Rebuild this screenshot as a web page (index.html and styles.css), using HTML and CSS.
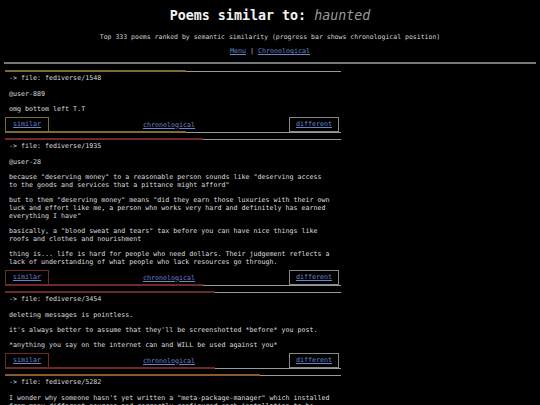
FILE: index.html
```html
<!DOCTYPE html>
<html>
<head>
<meta charset="utf-8">
<title>Poems similar to: haunted</title>
<link rel="stylesheet" href="styles.css">
</head>
<body>
<h1 class="title">Poems similar to: <em class="query">haunted</em></h1>
<p class="subtitle">Top 333 poems ranked by semantic similarity (progress bar shows chronological position)</p>
<p class="nav-links"><a href="#">Menu</a> <span class="sep">|</span> <a href="#">Chronological</a></p>
<hr class="rule">

<div class="poem" style="--p:54%;--c:#7e6d33">
  <div class="bar"><div class="fill"></div><div class="rest"></div></div>
  <div class="body">
    <div class="head">-&gt; file: fediverse/1548</div>
    <p class="first">@user-889</p>
    <p>omg bottom left T.T</p>
  </div>
  <div class="actions">
    <a class="btn btn-sim" href="#">similar</a>
    <a class="chrono" href="#">chronological</a>
    <a class="btn btn-diff" href="#">different</a>
  </div>
  <div class="bar"><div class="fill"></div><div class="rest"></div></div>
</div>

<div class="poem" style="--p:59%;--c:#6e2b2b">
  <div class="bar"><div class="fill"></div><div class="rest"></div></div>
  <div class="body">
    <div class="head">-&gt; file: fediverse/1935</div>
    <p class="first">@user-28</p>
    <p>because "deserving money" to a reasonable person sounds like "deserving access to the goods and services that a pittance might afford"</p>
    <p>but to them "deserving money" means "did they earn those luxuries with their own luck and effort like me, a person who works very hard and definitely has earned everything I have"</p>
    <p>basically, a "blood sweat and tears" tax before you can have nice things like roofs and clothes and nourishment</p>
    <p>thing is... life is hard for people who need dollars. Their judgement reflects a lack of understanding of what people who lack resources go through.</p>
  </div>
  <div class="actions">
    <a class="btn btn-sim" href="#">similar</a>
    <a class="chrono" href="#">chronological</a>
    <a class="btn btn-diff" href="#">different</a>
  </div>
  <div class="bar"><div class="fill"></div><div class="rest"></div></div>
</div>

<div class="poem" style="--p:62.5%;--c:#6a2a2a">
  <div class="bar"><div class="fill"></div><div class="rest"></div></div>
  <div class="body">
    <div class="head">-&gt; file: fediverse/3454</div>
    <p class="first">deleting messages is pointless.</p>
    <p>it's always better to assume that they'll be screenshotted *before* you post.</p>
    <p>*anything you say on the internet can and WILL be used against you*</p>
  </div>
  <div class="actions">
    <a class="btn btn-sim" href="#">similar</a>
    <a class="chrono" href="#">chronological</a>
    <a class="btn btn-diff" href="#">different</a>
  </div>
  <div class="bar"><div class="fill"></div><div class="rest"></div></div>
</div>

<div class="poem" style="--p:76%;--c:#8a5a30">
  <div class="bar"><div class="fill"></div><div class="rest"></div></div>
  <div class="body">
    <div class="head">-&gt; file: fediverse/5282</div>
    <p class="first">I wonder why someone hasn't yet written a "meta-package-manager" which installed from many different sources and correctly configured each installation to be compatible with every other one</p>
  </div>
</div>
</body>
</html>
```

FILE: styles.css
```css
html, body {
  background: #000;
}
body {
  margin: 0;
  padding: 0 4px;
  color: #dcdcdc;
  font-family: "DejaVu Sans Mono", "Liberation Mono", monospace;
  font-size: 6.67px;
  line-height: 8px;
}
a {
  color: #6684c8;
  text-decoration: underline;
}
.title {
  margin: 8px 0 0;
  text-align: center;
  font-size: 13.33px;
  line-height: 16px;
  font-weight: bold;
  color: #f2f2f2;
}
.query {
  font-weight: normal;
  font-style: italic;
  color: #9a9a9a;
}
.subtitle {
  margin: 9px 0 0;
  text-align: center;
  font-size: 6.5px;
  color: #d0d0d0;
}
.nav-links {
  margin: 6px 0 0;
  text-align: center;
}
.sep {
  color: #bbb;
}
.rule {
  margin: 7px 0 6px;
  border: 0;
  height: 2px;
  background: #777;
}
.poem {
  width: 336px;
  margin: 0 0 5px 1px;
}
.bar {
  display: flex;
  align-items: center;
  height: 2px;
}
.fill {
  width: var(--p);
  height: 2px;
  background: var(--c);
}
.rest {
  flex: 1;
  height: 1px;
  background: #9a9a9a;
}
.body {
  padding: 0 4px;
}
.body p {
  width: calc(80ch + 2px);
  margin: 7px 0 0;
}
.body p.first {
  margin-top: 8px;
}
.head {
  margin-top: 2px;
}
.actions {
  display: flex;
  align-items: center;
  margin: 4px 2px 0 0;
  height: 15px;
}
.btn {
  display: block;
  box-sizing: border-box;
  height: 15px;
  padding: 3px 7px;
  line-height: 7px;
  border: 1px solid #888;
}
.btn-sim {
  border-color: var(--c);
  padding: 3px 7px;
}
.btn-diff {
  padding: 3px 6px;
}
.chrono {
  flex: 1;
  text-align: center;
}
.actions + .bar {
  margin-top: -1px;
}
```
